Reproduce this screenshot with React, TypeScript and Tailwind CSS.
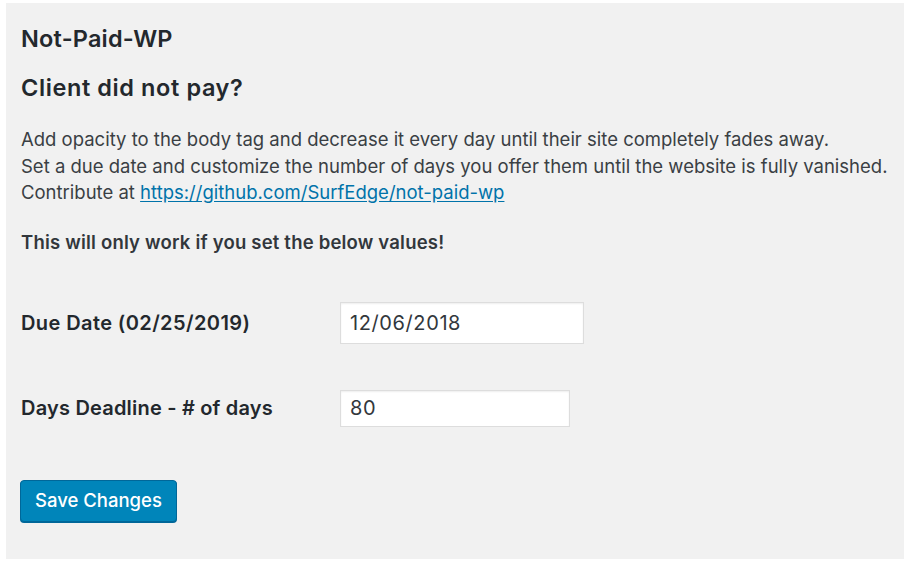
export default function App() {
  return (
    <div className="min-h-[563px] bg-white font-['Inter',sans-serif] text-[#23282d]">
      <div className="h-[3px]" />
      <div className="ml-[6px] mr-[5px] h-[556px] bg-[#f1f1f1] pl-[15px] pt-[20px]">
        <h1 className="text-[23.5px] font-semibold leading-[32px] tracking-[0.2px]">Not-Paid-WP</h1>
        <h2 className="mt-[17px] text-[23.5px] font-semibold leading-[32px] tracking-[0.6px]">Client did not pay?</h2>
        <p className="mt-[22px] text-[18.5px] leading-[26.5px] text-[#3a3f44]">
          Add opacity to the body tag and decrease it every day until their site completely fades away.
          <br />
          Set a due date and customize the number of days you offer them until the website is fully vanished.
          <br />
          Contribute at{" "}
          <a href="#" className="text-[#0073aa] underline underline-offset-2">
            https://github.com/SurfEdge/not-paid-wp
          </a>
        </p>
        <p className="mt-[23px] text-[18.5px] font-semibold leading-[26px] tracking-[0.2px] text-[#32373c]">
          This will only work if you set the below values!
        </p>

        <div className="mt-[47px] flex items-center">
          <label className="w-[319px] text-[20px] font-semibold tracking-[0.4px]">Due Date (02/25/2019)</label>
          <input
            defaultValue="12/06/2018"
            className="h-[42px] w-[244px] border border-[#dddddd] bg-white px-[9px] text-[20px] tracking-[0.6px] text-[#32373c] shadow-[inset_0_1px_2px_rgba(0,0,0,0.07)] outline-none"
          />
        </div>

        <div className="mt-[46px] flex items-center">
          <label className="w-[319px] text-[20px] font-semibold tracking-[0.2px]">Days Deadline - # of days</label>
          <input
            defaultValue="80"
            className="h-[37px] w-[230px] border border-[#dddddd] bg-white px-[9px] text-[20px] tracking-[0.6px] text-[#32373c] shadow-[inset_0_1px_2px_rgba(0,0,0,0.07)] outline-none"
          />
        </div>

        <button className="mt-[53px] ml-[-1px] h-[42px] rounded-[4px] border border-[#006799] bg-[#0085ba] px-[14px] text-[18.5px] font-medium text-white shadow-[0_1px_0_#006799]">
          Save Changes
        </button>
      </div>
    </div>
  );
}
